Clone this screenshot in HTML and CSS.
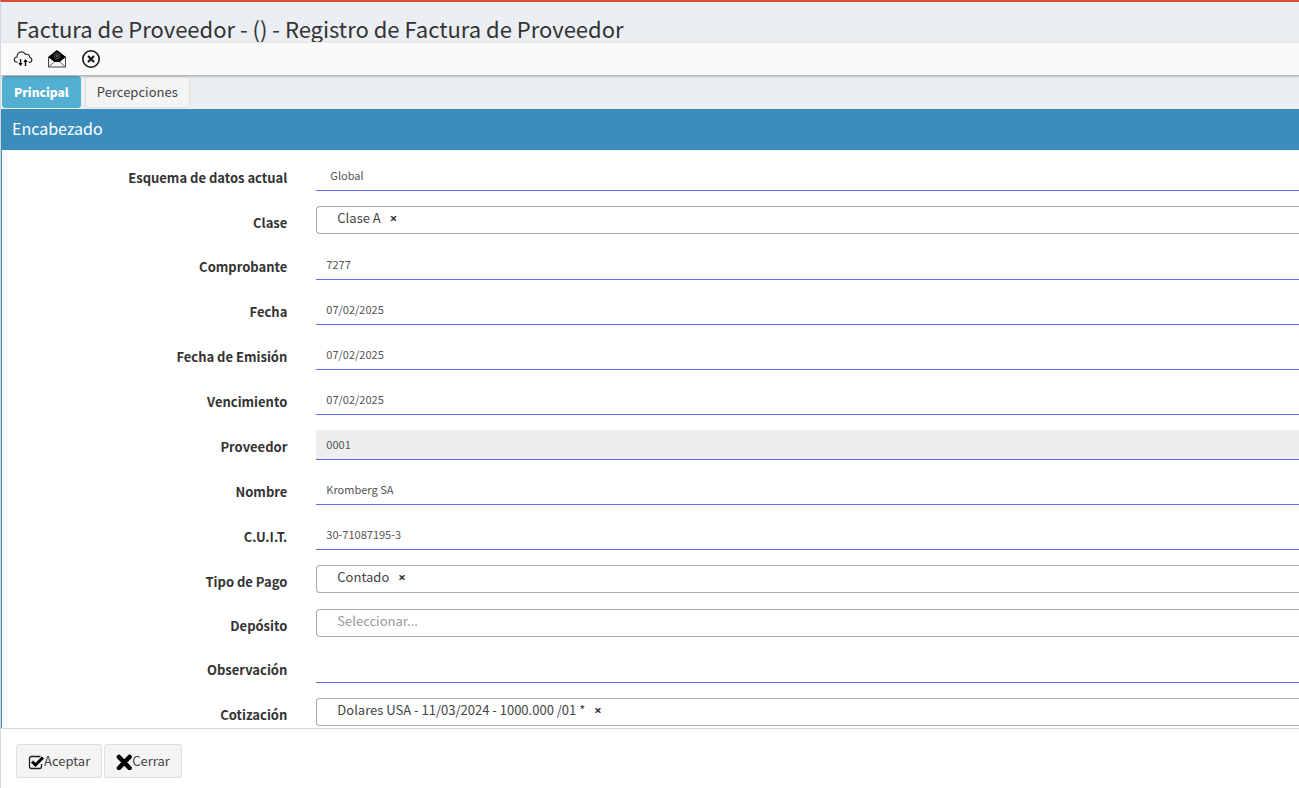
FILE: index.html
```html
<!DOCTYPE html>
<html lang="es">
<head>
  <meta charset="UTF-8" />
  <title>Factura de Proveedor</title>
  <link rel="stylesheet" href="styles.css">
</head>
<body>
  <header class="content-header">
    <h1>Factura de Proveedor - () - Registro de Factura de Proveedor</h1>
  </header>

  <div class="toolbar">
    <button type="button" class="tool" aria-label="Sincronizar">
      <svg width="20" height="20" viewBox="0 0 20 20" fill="none" stroke="#222" stroke-width="1.100">
        <path d="M4.500 13.300C2.600 13.100 1.300 12.300 1.300 10.700C1.300 9 2.500 8.100 4 8C3.900 5 5.800 2.900 8.500 2.900C10.300 2.900 11.700 3.900 12.500 5.400C14.800 4.700 16.700 6 16.800 8.200C18.100 8.700 18.900 9.500 18.900 10.900C18.900 12.500 17.700 13.300 15.800 13.400" />
        <path d="M7.500 10V15.500M12.500 17V11.500" stroke="#000" stroke-width="1.400" />
        <path d="M5.300 14L7.500 17L9.700 14ZM10.300 13L12.500 10L14.700 13Z" fill="#000" stroke="none" />
      </svg>
    </button>
    <button type="button" class="tool" aria-label="Enviar por correo">
      <svg width="20" height="20" viewBox="0 0 20 20">
        <path d="M1.500 8V18H18.500V8" fill="#f4f4f4" stroke="#444" />
        <path d="M1.500 18L7.500 12.500M18.500 18L12.500 12.500" stroke="#666" />
        <path d="M1 8L10 1L19 8L12.500 13H7.500Z" fill="#000" />
        <circle cx="10" cy="7" r="2.800" fill="none" stroke="#555" />
        <circle cx="10" cy="7" r="1" fill="none" stroke="#777" />
      </svg>
    </button>
    <button type="button" class="tool" aria-label="Cancelar">
      <svg width="20" height="20" viewBox="0 0 20 20" fill="none" stroke="#111">
        <circle cx="10" cy="10" r="8.200" stroke-width="1.600" />
        <path d="M7 7L13 13M13 7L7 13" stroke-width="2" />
      </svg>
    </button>
  </div>

  <nav class="tabs">
    <button type="button" class="tab active">Principal</button>
    <button type="button" class="tab">Percepciones</button>
  </nav>

  <main class="box">
    <h2 class="box-header">Encabezado</h2>
    <form class="box-body" id="factura">
      <div class="form-group">
        <label for="esquema">Esquema de datos actual</label>
        <input class="field esquema" type="text" id="esquema" value="Global">
      </div>
      <div class="form-group">
        <label for="clase">Clase</label>
        <div class="selectize">
          <select id="clase"><option>Clase A</option></select>
          <button type="button" class="remove" aria-label="Quitar">×</button>
        </div>
      </div>
      <div class="form-group">
        <label for="comprobante">Comprobante</label>
        <input class="field" type="text" id="comprobante" value="7277">
      </div>
      <div class="form-group">
        <label for="fecha">Fecha</label>
        <input class="field" type="text" id="fecha" value="07/02/2025">
      </div>
      <div class="form-group">
        <label for="emision">Fecha de Emisión</label>
        <input class="field" type="text" id="emision" value="07/02/2025">
      </div>
      <div class="form-group">
        <label for="vencimiento">Vencimiento</label>
        <input class="field" type="text" id="vencimiento" value="07/02/2025">
      </div>
      <div class="form-group">
        <label for="proveedor">Proveedor</label>
        <input class="field" type="text" id="proveedor" value="0001" readonly>
      </div>
      <div class="form-group">
        <label for="nombre">Nombre</label>
        <input class="field" type="text" id="nombre" value="Kromberg SA">
      </div>
      <div class="form-group">
        <label for="cuit">C.U.I.T.</label>
        <input class="field" type="text" id="cuit" value="30-71087195-3">
      </div>
      <div class="form-group">
        <label for="pago">Tipo de Pago</label>
        <div class="selectize">
          <select id="pago"><option>Contado</option></select>
          <button type="button" class="remove" aria-label="Quitar">×</button>
        </div>
      </div>
      <div class="form-group">
        <label for="deposito">Depósito</label>
        <div class="selectize">
          <select id="deposito" class="empty"><option value="">Seleccionar...</option></select>
        </div>
      </div>
      <div class="form-group">
        <label for="observacion">Observación</label>
        <input class="field" type="text" id="observacion">
      </div>
      <div class="form-group">
        <label for="cotizacion">Cotización</label>
        <div class="selectize">
          <select id="cotizacion"><option>Dolares USA - 11/03/2024 - 1000.000 /01 *</option></select>
          <button type="button" class="remove" aria-label="Quitar">×</button>
        </div>
      </div>
    </form>
  </main>

  <footer class="actions">
    <button type="submit" form="factura" class="btn">
      <svg width="16" height="16" viewBox="0 0 16 16" fill="none">
        <path d="M12.500 2.500H3.500Q1.500 2.500 1.500 4.500V12.500Q1.500 14.500 3.500 14.500H11.500Q13.500 14.500 13.500 12.500V10" stroke="#222" stroke-width="1.300" />
        <path d="M4 7.500L7.500 11L15 3.500" stroke="#000" stroke-width="3" />
      </svg>Aceptar
    </button>
    <button type="button" class="btn">
      <svg width="16" height="16" viewBox="0 0 16 16" fill="none">
        <path d="M3 3L13.500 14M13.500 3L3 14" stroke="#000" stroke-width="4.600" stroke-linecap="round" />
      </svg>Cerrar
    </button>
  </footer>
</body>
</html>
```
FILE: styles.css
```css
* {
  box-sizing: border-box;
}
body {
  margin: 0;
  height: 100vh;
  display: flex;
  flex-direction: column;
  overflow: hidden;
  background: #ebeef3;
  border-top: 2px solid #dd4b39;
  border-left: 1px solid #d2d6de;
  color: #333;
  font-family: "Noto Sans CJK SC", "Noto Sans", sans-serif;
  font-size: 13px;
  line-height: 20px;
}
button, input, select {
  font-family: inherit;
  font-size: inherit;
  line-height: inherit;
}
.content-header {
  height: 40px;
  padding: 12px 15px 0;
}
.content-header h1 {
  margin: 0;
  font-size: 22px;
  font-weight: 400;
  line-height: 28px;
}
.toolbar {
  position: relative;
  display: flex;
  align-items: center;
  gap: 14px;
  height: 34px;
  padding: 0 12px;
  background: #fafafa;
  border-top: 1px solid #e4e6ea;
  border-bottom: 1px solid #b4b7bf;
  box-shadow: 0 1px 2px rgba(0, 0, 0, 0.2);
}
.tool {
  display: flex;
  padding: 0;
  border: none;
  background: none;
  cursor: pointer;
}
.tabs {
  display: flex;
  gap: 4px;
  height: 33px;
  padding: 0 1px 1px;
}
.tab {
  padding: 0 11px;
  border: 1px solid #ddd;
  border-radius: 3px;
  background: #f4f4f4;
  color: #444;
  cursor: pointer;
}
.tab.active {
  border-color: #52afd1;
  background: #52afd1;
  color: #fff;
  font-size: 12px;
  font-weight: 900;
}
.box {
  flex: 1;
  min-height: 0;
  overflow: hidden;
  background: #fff;
  border-left: 1px solid #3c8dbc;
}
.box-header {
  margin: 0;
  padding: 9px 10px 12px;
  background: #3c8dbc;
  color: #fff;
  font-size: 16px;
  font-weight: 400;
  line-height: 20px;
}
.box-body {
  display: flex;
  flex-direction: column;
  gap: 15px;
  padding-top: 10px;
  border-top: 1px solid #f4f4f4;
}
.form-group {
  display: grid;
  grid-template-columns: 22% 1fr;
  column-gap: 29px;
}
.form-group label {
  padding-top: 7px;
  height: 28px;
  font-weight: 700;
  text-align: right;
}
.field {
  width: 100%;
  height: 30px;
  padding: 0 10px 2px;
  border: none;
  border-bottom: 1px solid #66f;
  border-radius: 0;
  background: #fff;
  color: #555;
  font-size: 11px;
}
.field.esquema {
  padding-left: 14px;
}
.field[readonly] {
  background: #eee;
}
.selectize {
  display: flex;
  align-items: flex-start;
  gap: 9px;
  height: 28px;
  margin-bottom: 1px;
  padding: 1px 20px;
  border: 1px solid #aaa;
  border-right: none;
  border-radius: 4px 0 0 4px;
}
.selectize select {
  appearance: none;
  field-sizing: content;
  padding: 0;
  border: none;
  background: none;
  color: #444;
}
.selectize .empty {
  color: #999;
}
.remove {
  padding: 0;
  border: none;
  background: none;
  color: #333;
  font-family: "Open Sans", sans-serif;
  font-weight: 700;
  cursor: pointer;
}
.actions {
  display: flex;
  align-items: flex-start;
  gap: 2px;
  height: 60px;
  padding: 15px;
  background: #fff;
  border-top: 1px solid #d2d6de;
}
.btn {
  display: flex;
  align-items: center;
  height: 34px;
  padding: 0 11px;
  border: 1px solid #ddd;
  border-radius: 3px;
  background: #f4f4f4;
  color: #444;
  cursor: pointer;
}
.btn svg {
  margin-top: 2px;
}
```
